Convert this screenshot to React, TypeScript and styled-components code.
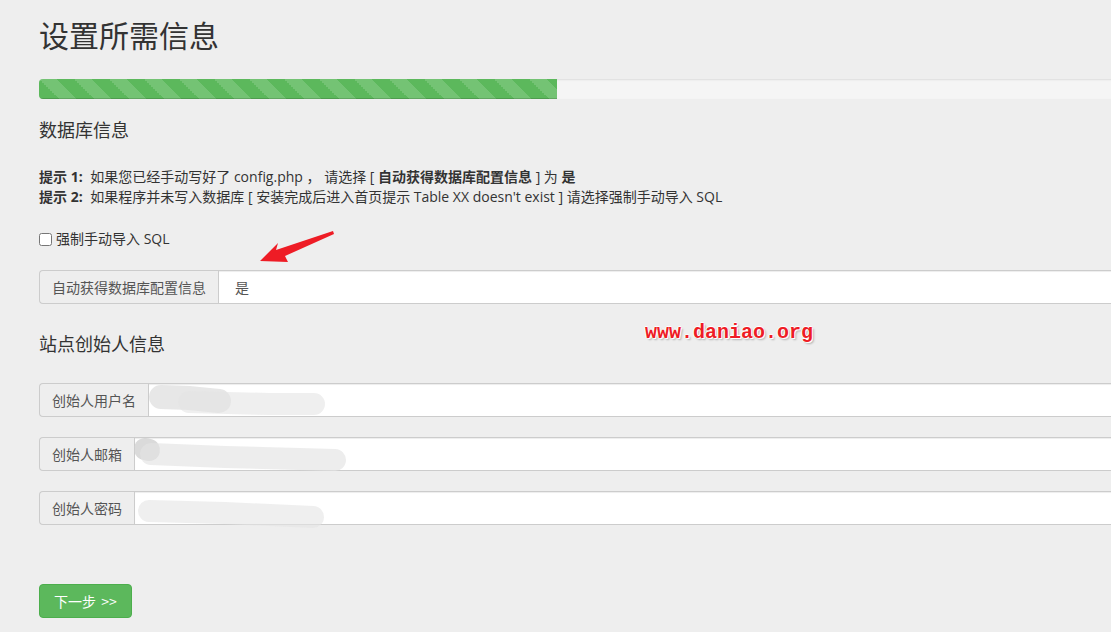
import styled, { createGlobalStyle } from "styled-components";

const GlobalStyle = createGlobalStyle`
  html, body {
    margin: 0;
    padding: 0;
    background: #eeeeee;
    overflow: hidden;
  }
  body {
    font-family: "Open Sans", "Noto Sans CJK SC", sans-serif;
    font-size: 14px;
    line-height: 20px;
    color: #333;
  }
`;

const Page = styled.div`
  position: relative;
  width: 1260px;
  height: 632px;
  padding: 18px 0 0 39px;
  box-sizing: border-box;
`;

const Title = styled.h2`
  margin: 0 0 28px;
  font-family: "Noto Sans CJK SC", sans-serif;
  font-size: 30px;
  line-height: 33px;
  font-weight: 400;
  color: #333;
`;

const Progress = styled.div`
  height: 20px;
  margin-bottom: 20px;
  background: #f5f5f5;
  border-radius: 4px 0 0 4px;
  box-shadow: inset 0 1px 2px rgba(0, 0, 0, 0.1);
  overflow: hidden;
`;

const Bar = styled.div<{ $width: number }>`
  width: ${(p) => p.$width}px;
  height: 100%;
  background-color: #5cb85c;
  background-image: linear-gradient(
    45deg,
    rgba(255, 255, 255, 0.15) 25%,
    transparent 25%,
    transparent 50%,
    rgba(255, 255, 255, 0.15) 50%,
    rgba(255, 255, 255, 0.15) 75%,
    transparent 75%,
    transparent
  );
  background-size: 35px 35px;
  box-shadow: inset 0 -1px 0 rgba(0, 0, 0, 0.15);
`;

const SectionTitle = styled.h4<{ $gap: number }>`
  margin: 0 0 ${(p) => p.$gap}px;
  font-family: "Noto Sans CJK SC", sans-serif;
  font-size: 18px;
  line-height: 20px;
  font-weight: 400;
  color: #333;
`;

const Tips = styled.div`
  margin-bottom: 22px;
  font-size: 14px;
  line-height: 20px;
  white-space: nowrap;
`;

const TipLabel = styled.b`
  margin-right: 4px;
`;

const CheckRow = styled.label`
  display: flex;
  align-items: center;
  height: 20px;
  margin-bottom: 21px;
  font-size: 14px;
  color: #333;

  input {
    width: 13px;
    height: 13px;
    margin: 0 4px 0 0;
  }
`;

const InputGroup = styled.div<{ $gap?: number }>`
  display: flex;
  height: 34px;
  margin-bottom: ${(p) => p.$gap ?? 20}px;
`;

const Addon = styled.span`
  display: flex;
  align-items: center;
  padding: 0 12px;
  background: #eeeeee;
  border: 1px solid #ccc;
  border-right: 0;
  border-radius: 4px 0 0 4px;
  color: #555;
  font-family: "Noto Sans CJK SC", sans-serif;
  font-size: 14px;
  white-space: nowrap;
`;

const Field = styled.div`
  position: relative;
  flex: 1;
  display: flex;
  align-items: center;
  padding: 0 16px;
  background: #fff;
  border: 1px solid #ccc;
  color: #555;
  font-family: "Noto Sans CJK SC", sans-serif;
  font-size: 14px;
  box-shadow: inset 0 1px 1px rgba(0, 0, 0, 0.075);
`;

const Smudge = styled.svg`
  position: absolute;
  left: 0;
  top: 0;
  width: 220px;
  height: 34px;
  overflow: visible;
`;

const Button = styled.button`
  margin-top: 59px;
  height: 34px;
  padding: 0 14px;
  background: #5cb85c;
  border: 1px solid #4cae4c;
  border-radius: 4px;
  color: #fff;
  font-family: "Noto Sans CJK SC", sans-serif;
  font-size: 14px;
  word-spacing: 2px;
  cursor: pointer;
`;

const Arrow = styled.svg`
  position: absolute;
  left: 255px;
  top: 228px;
  width: 84px;
  height: 40px;
`;

const Watermark = styled.div`
  position: absolute;
  left: 645px;
  top: 321px;
  font-family: "Liberation Mono", "DejaVu Sans Mono", monospace;
  font-weight: 700;
  font-size: 20px;
  line-height: 24px;
  color: #ee1c25;
  text-shadow: 1px 1px 0 #fff, -1px 0 0 #fff, 0 -1px 0 #fff, 2px 2px 2px rgba(0, 0, 0, 0.25);
`;

type Blob = { d: string; w: number; c: string };

const smudges: Blob[][] = [
  [
    { d: "M12 13 L40 14 L70 17", w: 24, c: "rgba(215,215,215,0.6)" },
    { d: "M40 18 L120 20 L165 20", w: 22, c: "rgba(228,228,228,0.6)" },
  ],
  [
    { d: "M10 11 L14 12", w: 22, c: "rgba(205,205,205,0.75)" },
    { d: "M16 16 L90 19 L200 22", w: 22, c: "rgba(228,228,228,0.65)" },
  ],
  [{ d: "M14 19 L90 21 L178 25", w: 22, c: "rgba(228,228,228,0.6)" }],
];

const renderSmudge = (i: number) => (
  <Smudge viewBox="0 0 220 34">
    {smudges[i].map((b, k) => (
      <path key={k} d={b.d} stroke={b.c} strokeWidth={b.w} strokeLinecap="round" fill="none" />
    ))}
  </Smudge>
);

export default function App() {
  return (
    <>
      <GlobalStyle />
      <Page>
        <Title>设置所需信息</Title>
        <Progress>
          <Bar $width={518} />
        </Progress>

        <SectionTitle $gap={28}>数据库信息</SectionTitle>
        <Tips>
          <div>
            <TipLabel>提示 1:</TipLabel> 如果您已经手动写好了 config.php ， 请选择 [ <b>自动获得数据库配置信息</b> ] 为 <b>是</b>
          </div>
          <div>
            <TipLabel>提示 2:</TipLabel> 如果程序并未写入数据库 [ 安装完成后进入首页提示 Table XX doesn't exist ] 请选择强制手动导入 SQL
          </div>
        </Tips>

        <CheckRow>
          <input type="checkbox" />
          强制手动导入 SQL
        </CheckRow>

        <InputGroup $gap={29}>
          <Addon>自动获得数据库配置信息</Addon>
          <Field>是</Field>
        </InputGroup>

        <SectionTitle $gap={30}>站点创始人信息</SectionTitle>

        <InputGroup>
          <Addon>创始人用户名</Addon>
          <Field>{renderSmudge(0)}</Field>
        </InputGroup>
        <InputGroup>
          <Addon>创始人邮箱</Addon>
          <Field>{renderSmudge(1)}</Field>
        </InputGroup>
        <InputGroup $gap={0}>
          <Addon>创始人密码</Addon>
          <Field>{renderSmudge(2)}</Field>
        </InputGroup>

        <Button type="button">下一步 &gt;&gt;</Button>

        <Arrow viewBox="0 0 84 40">
          <polygon points="5,33 23,15 21,22 78,3 79,6 30,28 33,34" fill="#ee1c25" />
        </Arrow>
        <Watermark>www.daniao.org</Watermark>
      </Page>
    </>
  );
}
